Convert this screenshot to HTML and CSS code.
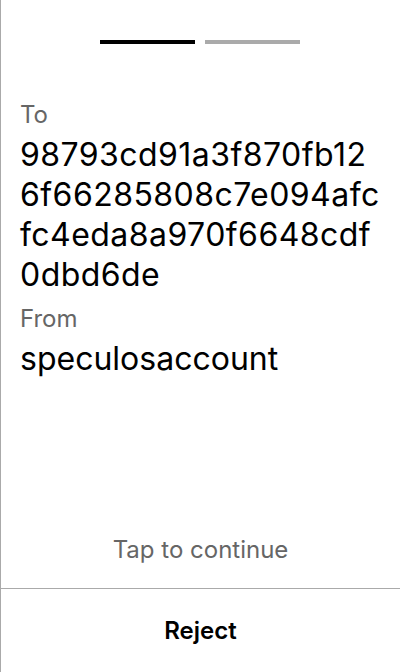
FILE: index.html
```html
<!DOCTYPE html>
<html>
<head>
<meta charset="utf-8">
<link rel="stylesheet" href="styles.css">
</head>
<body>
<div class="screen">
  <div class="progress">
    <div class="bar active"></div>
    <div class="bar"></div>
  </div>
  <div class="content">
    <div class="label">To</div>
    <div class="value hash">98793cd91a3f870fb126f66285808c7e094afcfc4eda8a970f6648cdf0dbd6de</div>
    <div class="label">From</div>
    <div class="value">speculosaccount</div>
  </div>
  <div class="tap">Tap to continue</div>
  <div class="footer">Reject</div>
</div>
</body>
</html>
```
FILE: styles.css
```css
html, body {
  margin: 0;
  padding: 0;
  background: #fff;
}
body {
  font-family: Inter, "Noto Sans", sans-serif;
  color: #000;
}
.screen {
  width: 400px;
  height: 672px;
  box-sizing: border-box;
  border-left: 1px solid #aaa;
  display: flex;
  flex-direction: column;
}
.progress {
  display: flex;
  justify-content: center;
  gap: 10px;
  padding-top: 40px;
  margin-left: -1px;
}
.bar {
  width: 95px;
  height: 4px;
  background: #aaa;
}
.bar.active {
  background: #000;
}
.content {
  padding: 55px 15px 0 19px;
  flex: 1;
}
.label {
  font-size: 24px;
  line-height: 32px;
  color: #666;
}
.value {
  font-size: 32px;
  line-height: 40px;
  margin-top: 4px;
  margin-bottom: 8px;
}
.hash {
  word-break: break-all;
  letter-spacing: 0.45px;
}
.tap {
  text-align: center;
  font-size: 24px;
  line-height: 32px;
  color: #666;
  padding-bottom: 22px;
}
.footer {
  border-top: 1px solid #aaa;
  height: 83px;
  display: flex;
  align-items: center;
  justify-content: center;
  font-size: 24px;
  font-weight: 600;
}
```
